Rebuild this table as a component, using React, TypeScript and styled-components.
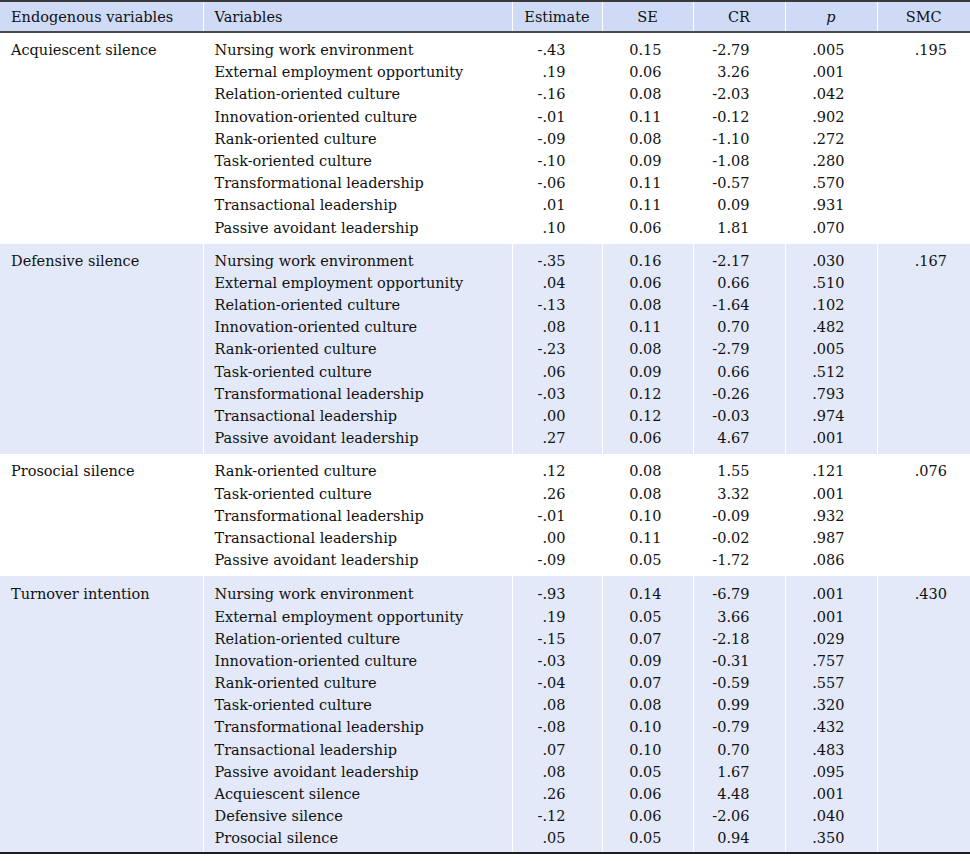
import React from "react";
import styled, { createGlobalStyle } from "styled-components";

const Global = createGlobalStyle`
  html, body { margin: 0; padding: 0; background: #ffffff; }
  body { font-family: "DejaVu Serif", "Liberation Serif", serif; color: #111111; }
`;

const Table = styled.table`
  width: 970px;
  table-layout: fixed;
  border-collapse: collapse;
  font-family: "DejaVu Serif", "Liberation Serif", serif;
  font-size: 14.5px;
  color: #111111;
  border-top: 2px solid #3a3a3a;
  border-bottom: 2px solid #1e1e1e;
`;

const HeadRow = styled.tr`
  background: #cfdbf6;
  border-bottom: 2px solid #4a4a4a;
`;

const Th = styled.th<{ $align?: string; $first?: boolean }>`
  height: 29px;
  padding: 0 0 0 ${(p) => (p.$align === "left" ? "11px" : "0")};
  text-align: ${(p) => p.$align || "center"};
  font-family: "DejaVu Serif", "Liberation Serif", serif;
  font-size: 14.5px;
  font-weight: normal;
  line-height: 20px;
  border-left: ${(p) => (p.$first ? "none" : "1px solid #ffffff")};
  vertical-align: middle;
`;

const Italic = styled.span`
  font-style: italic;
`;

const GroupRow = styled.tr<{ $shaded: boolean; $last: boolean }>`
  background: ${(p) => (p.$shaded ? "#e3e9f9" : "#ffffff")};
  & > td {
    padding-top: ${(p) => (p.$last ? "7px" : "6px")};
    padding-bottom: ${(p) => (p.$last ? "2px" : "5px")};
  }
`;

const Td = styled.td<{ $align?: string; $pr?: number; $first?: boolean }>`
  vertical-align: top;
  padding-left: ${(p) => (p.$align === "left" ? "11px" : "0")};
  padding-right: ${(p) => p.$pr ?? 0}px;
  text-align: ${(p) => p.$align || "right"};
  border-left: ${(p) => (p.$first ? "none" : "1px solid #ffffff")};
  white-space: nowrap;
`;

const Line = styled.div`
  line-height: 22.2px;
  height: 22.2px;
`;

const Note = styled.p`
  margin: 6px 0 0 0;
  padding-left: 4px;
  font-size: 14.5px;
  line-height: 20px;
`;

type Row = [string, string, string, string, string];

type Group = {
  name: string;
  smc: string;
  rows: Row[];
};

const groups: Group[] = [
  {
    name: "Acquiescent silence",
    smc: ".195",
    rows: [
      ["Nursing work environment", "-.43", "0.15", "-2.79", ".005"],
      ["External employment opportunity", ".19", "0.06", "3.26", ".001"],
      ["Relation-oriented culture", "-.16", "0.08", "-2.03", ".042"],
      ["Innovation-oriented culture", "-.01", "0.11", "-0.12", ".902"],
      ["Rank-oriented culture", "-.09", "0.08", "-1.10", ".272"],
      ["Task-oriented culture", "-.10", "0.09", "-1.08", ".280"],
      ["Transformational leadership", "-.06", "0.11", "-0.57", ".570"],
      ["Transactional leadership", ".01", "0.11", "0.09", ".931"],
      ["Passive avoidant leadership", ".10", "0.06", "1.81", ".070"],
    ],
  },
  {
    name: "Defensive silence",
    smc: ".167",
    rows: [
      ["Nursing work environment", "-.35", "0.16", "-2.17", ".030"],
      ["External employment opportunity", ".04", "0.06", "0.66", ".510"],
      ["Relation-oriented culture", "-.13", "0.08", "-1.64", ".102"],
      ["Innovation-oriented culture", ".08", "0.11", "0.70", ".482"],
      ["Rank-oriented culture", "-.23", "0.08", "-2.79", ".005"],
      ["Task-oriented culture", ".06", "0.09", "0.66", ".512"],
      ["Transformational leadership", "-.03", "0.12", "-0.26", ".793"],
      ["Transactional leadership", ".00", "0.12", "-0.03", ".974"],
      ["Passive avoidant leadership", ".27", "0.06", "4.67", ".001"],
    ],
  },
  {
    name: "Prosocial silence",
    smc: ".076",
    rows: [
      ["Rank-oriented culture", ".12", "0.08", "1.55", ".121"],
      ["Task-oriented culture", ".26", "0.08", "3.32", ".001"],
      ["Transformational leadership", "-.01", "0.10", "-0.09", ".932"],
      ["Transactional leadership", ".00", "0.11", "-0.02", ".987"],
      ["Passive avoidant leadership", "-.09", "0.05", "-1.72", ".086"],
    ],
  },
  {
    name: "Turnover intention",
    smc: ".430",
    rows: [
      ["Nursing work environment", "-.93", "0.14", "-6.79", ".001"],
      ["External employment opportunity", ".19", "0.05", "3.66", ".001"],
      ["Relation-oriented culture", "-.15", "0.07", "-2.18", ".029"],
      ["Innovation-oriented culture", "-.03", "0.09", "-0.31", ".757"],
      ["Rank-oriented culture", "-.04", "0.07", "-0.59", ".557"],
      ["Task-oriented culture", ".08", "0.08", "0.99", ".320"],
      ["Transformational leadership", "-.08", "0.10", "-0.79", ".432"],
      ["Transactional leadership", ".07", "0.10", "0.70", ".483"],
      ["Passive avoidant leadership", ".08", "0.05", "1.67", ".095"],
      ["Acquiescent silence", ".26", "0.06", "4.48", ".001"],
      ["Defensive silence", "-.12", "0.06", "-2.06", ".040"],
      ["Prosocial silence", ".05", "0.05", "0.94", ".350"],
    ],
  },
];

const widths = [203, 309, 90, 91, 92, 92, 93];
const numPad = [36, 31, 35, 32];

export default function App() {
  return (
    <>
      <Global />
      <Table>
        <colgroup>
          {widths.map((w, i) => (
            <col key={i} style={{ width: w }} />
          ))}
        </colgroup>
        <thead>
          <HeadRow>
            <Th $align="left" $first>
              Endogenous variables
            </Th>
            <Th $align="left">Variables</Th>
            <Th>Estimate</Th>
            <Th>SE</Th>
            <Th>CR</Th>
            <Th>
              <Italic>p</Italic>
            </Th>
            <Th>SMC</Th>
          </HeadRow>
        </thead>
        <tbody>
          {groups.map((g, gi) => (
            <GroupRow
              key={g.name}
              $shaded={gi % 2 === 1}
              $last={gi === groups.length - 1}
            >
              <Td $align="left" $first>
                <Line>{g.name}</Line>
              </Td>
              <Td $align="left">
                {g.rows.map((r) => (
                  <Line key={r[0]}>{r[0]}</Line>
                ))}
              </Td>
              {[1, 2, 3, 4].map((ci) => (
                <Td key={ci} $pr={numPad[ci - 1]}>
                  {g.rows.map((r, ri) => (
                    <Line key={ri}>{r[ci]}</Line>
                  ))}
                </Td>
              ))}
              <Td $pr={23}>
                <Line>{g.smc}</Line>
              </Td>
            </GroupRow>
          ))}
        </tbody>
      </Table>
      <Note>SE=standard error; CR=critical ratio; SMC=squared multiple correlations.</Note>
    </>
  );
}
